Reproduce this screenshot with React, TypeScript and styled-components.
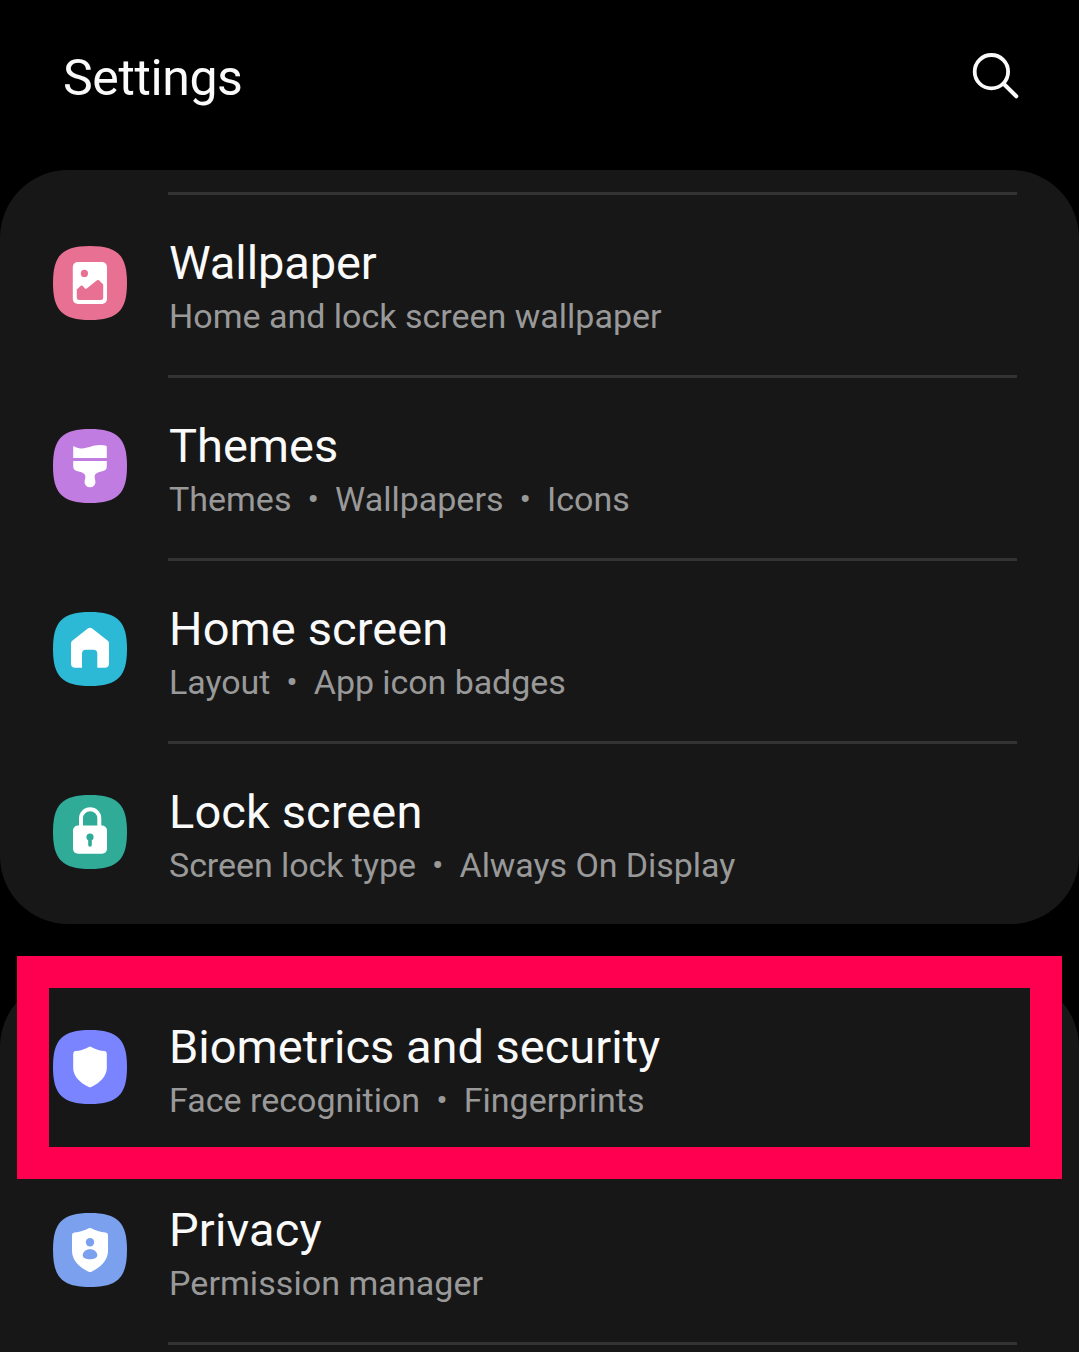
import React from "react";
import styled, { createGlobalStyle } from "styled-components";

const GlobalStyle = createGlobalStyle`
  *, *::before, *::after { box-sizing: border-box; }
  body {
    margin: 0;
    background: #000;
    overflow: hidden;
    font-family: Roboto, "Liberation Sans", sans-serif;
  }
`;

const Screen = styled.main`
  width: 1079px;
  height: 1352px;
  background: #000;
  overflow: hidden;
`;

const Header = styled.header`
  display: flex;
  align-items: center;
  justify-content: space-between;
  height: 170px;
  padding: 0 59px 16px 63px;
`;

const PageTitle = styled.h1`
  margin: 2px 0 0;
  font-size: 50px;
  font-weight: 400;
  line-height: 60px;
  letter-spacing: -0.38px;
  color: #fafafa;
`;

const SearchButton = styled.button`
  display: flex;
  padding: 0;
  border: 0;
  background: none;
  color: #fafafa;
`;

const Card = styled.section<{ $gap?: number; $lead?: number }>`
  margin-top: ${(p) => p.$gap ?? 0}px;
  padding-top: ${(p) => p.$lead ?? 0}px;
  border-radius: 68px;
  background: #171717;
`;

const OpenCard = styled(Card)`
  border-radius: 68px 68px 0 0;
  height: 380px;
`;

const Divider = styled.hr`
  height: 3px;
  margin: 0 62px 0 168px;
  border: 0;
  background: #333;
`;

const Row = styled.div`
  position: relative;
  display: flex;
  align-items: flex-start;
  gap: 42px;
  height: 180px;
  padding: 40px 62px 0 53px;
`;

const Badge = styled.svg`
  flex: none;
  width: 74px;
  height: 74px;
  margin-top: 11px;
`;

const Labels = styled.div`
  display: flex;
  flex-direction: column;
`;

const Title = styled.div<{ $spacing: number }>`
  font-size: 47px;
  line-height: 56px;
  letter-spacing: ${(p) => p.$spacing}px;
  color: #fafafa;
  white-space: nowrap;
`;

const Summary = styled.div<{ $spacing: number }>`
  display: flex;
  margin-top: 5px;
  font-size: 34px;
  line-height: 40px;
  letter-spacing: ${(p) => p.$spacing}px;
  color: #999;
  white-space: nowrap;
`;

const Dot = styled.span`
  width: 43.6px;
  text-align: center;
`;

const Highlight = styled.div`
  position: absolute;
  top: -23px;
  left: 17px;
  width: 1045px;
  height: 222.5px;
  border: 32px solid #ff0050;
  z-index: 1;
`;

const SQUIRCLE =
  "M37 0C64.6 0 74 9.4 74 37S64.6 74 37 74 0 64.6 0 37 9.4 0 37 0Z";

type Item = {
  title: string;
  spacing: number;
  summary: string[];
  summarySpacing?: number;
  color: string;
  glyph: React.ReactNode;
  highlighted?: boolean;
};

const wallpaper: Item = {
  title: "Wallpaper",
  spacing: -0.1,
  summary: ["Home and lock screen wallpaper"],
  color: "#e87093",
  glyph: (
    <>
      <rect x="19.8" y="16" width="34.2" height="42" rx="5" fill="#fff" />
      <g fill="#e87093">
        <circle cx="31.4" cy="27.4" r="3.6" />
        <path d="M23.8 43.6 27.8 39.8Q28.7 39 29.6 39.8L32 42.6Q32.8 43.4 33.7 42.6L44 34.3Q45 33.5 46 34.3L50.2 38.4V51.5Q50.2 54 47.7 54H26.3Q23.8 54 23.8 51.5Z" />
      </g>
    </>
  ),
};

const themes: Item = {
  title: "Themes",
  spacing: 0,
  summary: ["Themes", "Wallpapers", "Icons"],
  color: "#c07ce0",
  glyph: (
    <g fill="#fff">
      <path d="M20.2 18Q20.2 16.8 21.4 17.4C31 22.6 37 16 47 16Q51 16 53 16.7 53.8 17 53.8 18V29H20.2Z" />
      <path d="M20.2 32H53.8V37.5Q53.8 41 50.3 42L45.5 43.3C42.5 44.3 41.4 46 41.6 48.3L42.3 51.4A5.5 5.5 0 1 1 31.7 51.4L32.4 48.3C32.6 46 31.5 44.3 28.5 43.3L23.7 42Q20.2 41 20.2 37.5Z" />
    </g>
  ),
};

const home: Item = {
  title: "Home screen",
  spacing: 0.1,
  summary: ["Layout", "App icon badges"],
  summarySpacing: -0.07,
  color: "#2bb9d6",
  glyph: (
    <path
      fill="#fff"
      d="M34.8 16.6Q37 15 39.2 16.6L54.5 28.6Q56 29.8 56 31.5V51.5Q56 55.8 51.7 55.8H44.3V41.5Q44.3 37.7 40.5 37.7H32.8Q29 37.7 29 41.5V55.8H22.3Q18 55.8 18 51.5V31.5Q18 29.8 19.5 28.6Z"
    />
  ),
};

const lock: Item = {
  title: "Lock screen",
  spacing: 0.1,
  summary: ["Screen lock type", "Always On Display"],
  summarySpacing: -0.06,
  color: "#2fab98",
  glyph: (
    <>
      <path
        d="M28 32V23.4A9.15 9.15 0 0 1 46.3 23.4V32"
        fill="none"
        stroke="#fff"
        strokeWidth="4"
      />
      <rect x="20" y="30.6" width="34" height="28.2" rx="5" fill="#fff" />
      <circle cx="37" cy="42" r="3.6" fill="#2fab98" />
      <path d="M37 42V50" stroke="#2fab98" strokeWidth="3.6" strokeLinecap="round" />
    </>
  ),
};

const biometrics: Item = {
  title: "Biometrics and security",
  spacing: 0,
  summary: ["Face recognition", "Fingerprints"],
  color: "#7a84ff",
  highlighted: true,
  glyph: (
    <path
      fill="#fff"
      d="M35.8 16.9Q37 16.3 38.2 16.9C42 19 47 20.6 51.5 21.1Q53.8 21.4 53.8 23.7V38C53.8 46 47 53 38.3 57Q37 57.6 35.7 57C27 53 20.2 46 20.2 38V23.7Q20.2 21.4 22.5 21.1C27 20.6 32 19 35.8 16.9Z"
    />
  ),
};

const privacy: Item = {
  title: "Privacy",
  spacing: 0.15,
  summary: ["Permission manager"],
  summarySpacing: 0.06,
  color: "#7ba1ee",
  glyph: (
    <>
      <path
        fill="#fff"
        d="M35.8 15.2Q37 14.6 38.2 15.2C42 17.3 47.5 19 52.5 19.5Q55 19.8 55 22.3V38C55 47 47.5 54.5 38.3 58.8Q37 59.4 35.7 58.8C26.5 54.5 19 47 19 38V22.3Q19 19.8 21.5 19.5C26.5 19 32 17.3 35.8 15.2Z"
      />
      <g fill="#7ba1ee">
        <circle cx="37" cy="29.3" r="4.2" />
        <path d="M37 36.2C41.3 36.2 44.3 38.9 44.3 42.2 44.3 45 41 46.2 37 46.2S29.7 45 29.7 42.2C29.7 38.9 32.7 36.2 37 36.2Z" />
      </g>
    </>
  ),
};

function SettingRow({ item }: { item: Item }) {
  return (
    <Row>
      <Badge viewBox="0 0 74 74" aria-hidden="true">
        <path d={SQUIRCLE} fill={item.color} />
        {item.glyph}
      </Badge>
      <Labels>
        <Title $spacing={item.spacing}>{item.title}</Title>
        <Summary $spacing={item.summarySpacing ?? 0}>
          {item.summary.map((part, i) => (
            <React.Fragment key={part}>
              {i > 0 && <Dot>•</Dot>}
              <span>{part}</span>
            </React.Fragment>
          ))}
        </Summary>
      </Labels>
      {item.highlighted && <Highlight />}
    </Row>
  );
}

export default function App() {
  return (
    <>
      <GlobalStyle />
      <Screen>
        <Header>
          <PageTitle>Settings</PageTitle>
          <SearchButton aria-label="Search">
            <svg width="48" height="48" viewBox="0 0 48 48" fill="none" stroke="currentColor">
              <circle cx="19.4" cy="18.7" r="16.7" strokeWidth="3.8" />
              <path d="M31.6 30.8 44.3 43.3" strokeWidth="4" strokeLinecap="round" />
            </svg>
          </SearchButton>
        </Header>
        <Card $lead={22}>
          {[wallpaper, themes, home, lock].map((item) => (
            <React.Fragment key={item.title}>
              <Divider />
              <SettingRow item={item} />
            </React.Fragment>
          ))}
        </Card>
        <OpenCard $gap={55}>
          {[biometrics, privacy].map((item) => (
            <React.Fragment key={item.title}>
              <SettingRow item={item} />
              <Divider />
            </React.Fragment>
          ))}
        </OpenCard>
      </Screen>
    </>
  );
}
